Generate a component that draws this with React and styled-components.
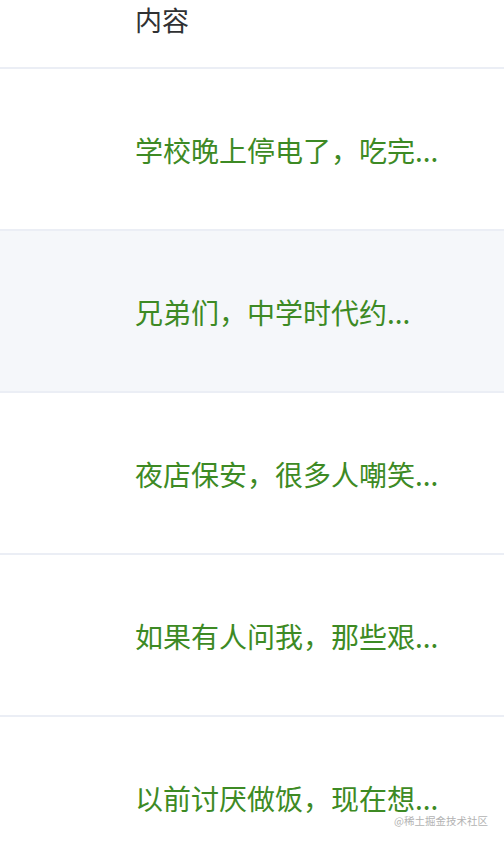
import React from 'react';
import styled, { createGlobalStyle } from 'styled-components';

const GlobalStyle = createGlobalStyle`
  html, body {
    margin: 0;
    padding: 0;
    background: #fff;
    font-family: "Noto Sans CJK SC", "Noto Sans", sans-serif;
  }
  body {
    width: 504px;
    height: 844px;
    overflow: hidden;
  }
`

const Page = styled.div`
  position: relative;
  width: 504px;
  height: 844px;
  overflow: hidden;
  background: #fff;
`

const Table = styled.div`
  display: flex;
  flex-direction: column;
`

const HeaderRow = styled.div`
  height: 69px;
  box-sizing: border-box;
  border-bottom: 2px solid #ebeef5;
  padding-left: 135px;
`

const HeaderCell = styled.div`
  font-size: 27px;
  line-height: 40px;
  color: #303133;
  font-weight: 400;
`

const Row = styled.div`
  height: 162px;
  box-sizing: border-box;
  border-bottom: 2px solid #ebeef5;
  display: flex;
  align-items: center;
  padding-left: 135px;
  padding-top: 2px;
  background: ${p => (p.$hover ? '#f5f7fa' : '#fff')};
`

const Content = styled.div`
  font-size: 28px;
  color: #3d8a24;
  white-space: nowrap;
`

const Watermark = styled.div`
  position: absolute;
  right: 16px;
  bottom: 16px;
  font-size: 10.5px;
  line-height: 14px;
  color: #b3b3b3;
`

const rows = [
  '学校晚上停电了，吃完...',
  '兄弟们，中学时代约...',
  '夜店保安，很多人嘲笑...',
  '如果有人问我，那些艰...',
  '以前讨厌做饭，现在想...',
];

export default function App() {
  return (
    <Page>
      <GlobalStyle />
      <Table>
        <HeaderRow>
          <HeaderCell>内容</HeaderCell>
        </HeaderRow>
        {rows.map((text, i) => (
          <Row key={i} $hover={i === 1}>
            <Content>{text}</Content>
          </Row>
        ))}
      </Table>
      <Watermark>@稀土掘金技术社区</Watermark>
    </Page>
  );
}
